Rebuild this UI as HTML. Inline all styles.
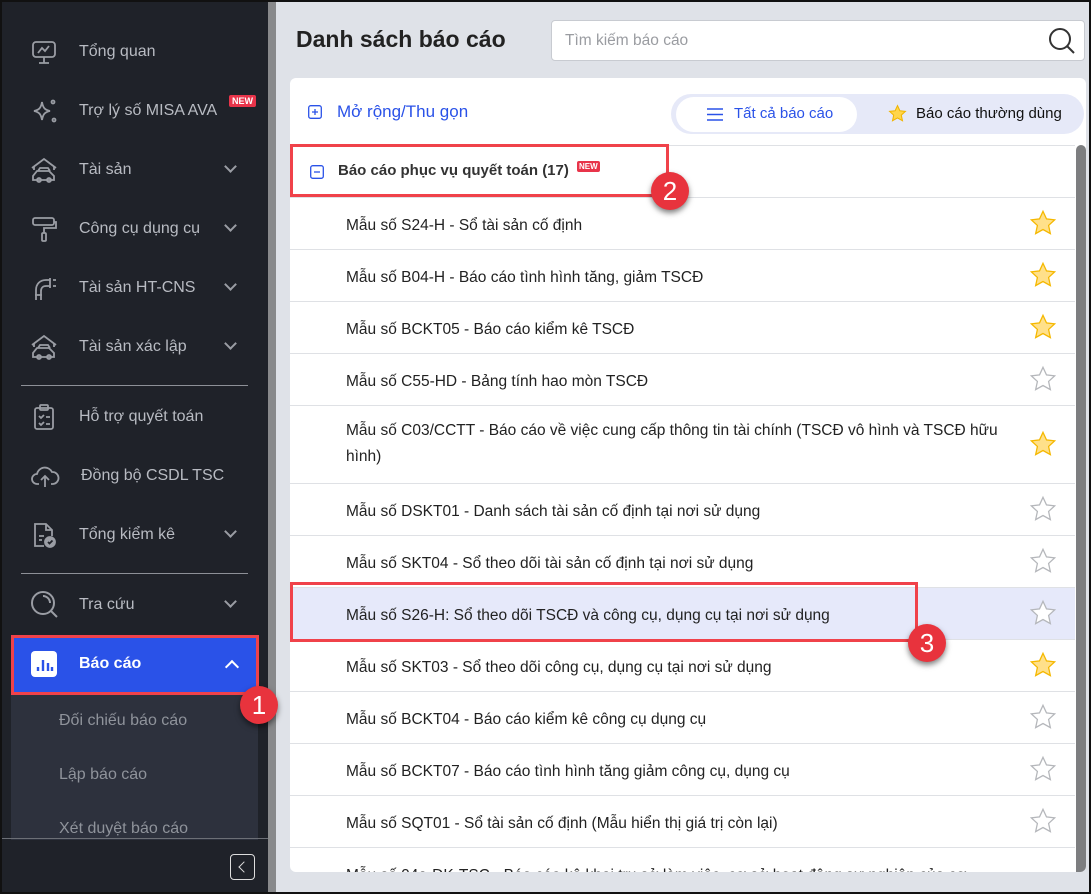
<!DOCTYPE html>
<html><head><meta charset="utf-8"><style>
*{box-sizing:border-box;margin:0;padding:0}
body{width:1091px;height:894px;overflow:hidden;position:relative;background:#e4e6eb;font-family:"Liberation Sans",sans-serif}
.abs{position:absolute}
#frame{left:0;top:0;width:1091px;height:894px;border:2px solid #111;z-index:10;pointer-events:none}
#sb{left:0;top:0;width:268px;height:894px;background:#1f2229}
#strip{left:268px;top:0;width:8px;height:894px;background:#88898b}
.si{position:absolute;left:0;width:268px;height:40px;color:#b8bbc2;font-size:16px;display:flex;align-items:center}
.si svg{position:absolute;left:30px}
.si .t{position:absolute;left:79px}
.chev{position:absolute;left:226px;width:9px;height:9px;border-right:2px solid #9a9da4;border-bottom:2px solid #9a9da4;transform:rotate(45deg)}
.div{position:absolute;left:21px;width:227px;height:1px;background:#8d9097}
.sub{position:absolute;left:59px;color:#8f939b;font-size:16px}
#main{left:276px;top:0;width:815px;height:894px;background:#dfe2e8}
#card{left:290px;top:78px;width:796px;height:794px;background:#fff;border-radius:6px;overflow:hidden}
.row{position:absolute;left:0;width:785px;border-top:1px solid #dfe1e5;font-size:15.5px;color:#222}
.row .t{position:absolute;left:56px;top:15px;line-height:26px}
.star{position:absolute;left:739px;top:11px}
</style></head><body>
<div id="sb" class="abs">
<div class="si" style="top:32px"><svg width="28" height="28" viewBox="0 0 28 28" fill="none" stroke="#9a9da4" stroke-width="1.8"><rect x="3" y="4" width="22" height="15" rx="3"/><path d="M9 25h10M14 19v6M8 15l4-5 3 3 4-5"/></svg><span class="t">Tổng quan</span></div>
<div class="si" style="top:91px"><svg width="28" height="28" viewBox="0 0 28 28" fill="none" stroke="#9a9da4" stroke-width="1.8"><path d="M12 5c1 6 3 8 8 9-5 1-7 3-8 9-1-6-3-8-8-9 5-1 7-3 8-9z"/><circle cx="23" cy="5" r="1.5"/><circle cx="24" cy="23" r="1.5"/></svg><span class="t">Trợ lý số MISA AVA</span><span class="abs" style="left:229px;top:4px;background:#e8344a;color:#fff;font-size:9px;font-weight:bold;padding:1px 3px;border-radius:2px">NEW</span></div>
<div class="si" style="top:150px"><svg width="28" height="28" viewBox="0 0 28 28" fill="none" stroke="#9a9da4" stroke-width="1.8"><path d="M2 12L14 3l12 9M4 10v4M24 10v4"/><path d="M3 24v-4l4-5h12l5 5v4zM8 15l2-3h8l2 3"/><circle cx="9" cy="24" r="2"/><circle cx="19" cy="24" r="2"/></svg><span class="t">Tài sản</span><span class="chev" style="top:12px"></span></div>
<div class="si" style="top:209px"><svg width="28" height="28" viewBox="0 0 28 28" fill="none" stroke="#9a9da4" stroke-width="1.8"><rect x="3" y="3" width="21" height="7" rx="2"/><path d="M24 7h2v6H14v5"/><rect x="12" y="18" width="4" height="8" rx="1"/></svg><span class="t">Công cụ dụng cụ</span><span class="chev" style="top:12px"></span></div>
<div class="si" style="top:268px"><svg width="28" height="28" viewBox="0 0 28 28" fill="none" stroke="#9a9da4" stroke-width="1.8"><path d="M6 26V16c0-6 4-10 10-10h4M11 26V17c0-3 2-5 5-5h4M20 4v10M23 6h3M23 12h3M5 21h7"/></svg><span class="t">Tài sản HT-CNS</span><span class="chev" style="top:12px"></span></div>
<div class="si" style="top:327px"><svg width="28" height="28" viewBox="0 0 28 28" fill="none" stroke="#9a9da4" stroke-width="1.8"><path d="M2 12L14 3l12 9M4 10v4M24 10v4"/><path d="M3 24v-4l4-5h12l5 5v4zM8 15l2-3h8l2 3"/><circle cx="9" cy="24" r="2"/><circle cx="19" cy="24" r="2"/></svg><span class="t">Tài sản xác lập</span><span class="chev" style="top:12px"></span></div>
<div class="div" style="top:385px"></div>
<div class="si" style="top:397px"><svg width="28" height="28" viewBox="0 0 28 28" fill="none" stroke="#9a9da4" stroke-width="1.8"><rect x="5" y="5" width="18" height="21" rx="2"/><rect x="10" y="2" width="8" height="5" rx="1"/><path d="M9 13l2 2 3-3M16 14h4M9 20l2 2 3-3M16 21h4"/></svg><span class="t">Hỗ trợ quyết toán</span></div>
<div class="si" style="top:456px"><svg width="30" height="28" viewBox="0 0 30 28" fill="none" stroke="#9a9da4" stroke-width="1.8"><path d="M9 22H7a5 5 0 010-10 8 8 0 0115-2 6 6 0 011 12h-2M15 25V14M11 18l4-4 4 4"/></svg><span class="t" style="left:81px">Đồng bộ CSDL TSC</span></div>
<div class="si" style="top:515px"><svg width="28" height="28" viewBox="0 0 28 28" fill="none" stroke="#9a9da4" stroke-width="1.8"><path d="M14 25H5V3h11l6 6v6M16 3v6h6M9 15h5M9 19h3"/><circle cx="20" cy="21" r="5" fill="#9a9da4"/><path d="M18 21l1.5 1.5 3-3" stroke="#1f2229"/></svg><span class="t">Tổng kiểm kê</span><span class="chev" style="top:12px"></span></div>
<div class="div" style="top:573px"></div>
<div class="si" style="top:585px"><svg width="30" height="30" viewBox="0 0 30 30" fill="none" stroke="#9a9da4" stroke-width="2"><circle cx="13" cy="13" r="11"/><path d="M21 21l6 6M13 6a7 7 0 017 7"/></svg><span class="t">Tra cứu</span><span class="chev" style="top:12px"></span></div>
<div class="abs" style="left:11px;top:692px;width:247px;height:148px;background:#2d313d"></div>
<div class="abs" style="left:11px;top:635px;width:248px;height:60px;background:#2a52e8;border:3px solid #f0424a"></div>
<div class="si" style="top:644px;color:#fff;font-weight:bold"><svg width="26" height="26" viewBox="0 0 26 26" style="left:31px"><rect width="26" height="26" rx="4" fill="#fff"/><path d="M7 16v4M12 9v11M17 12v8M21 16v4" stroke="#2a52e8" stroke-width="2.4"/></svg><span class="t">Báo cáo</span><span class="abs" style="left:227px;top:18px;width:10px;height:10px;border-left:2.5px solid #fff;border-top:2.5px solid #fff;transform:rotate(45deg)"></span></div>
<div class="sub" style="top:712px">Đối chiếu báo cáo</div>
<div class="sub" style="top:766px">Lập báo cáo</div>
<div class="sub" style="top:820px">Xét duyệt báo cáo</div>
<div class="abs" style="left:0;top:838px;width:276px;height:1px;background:#6c6f76"></div>
<div class="abs" style="left:230px;top:854px;width:25px;height:26px;border:1.5px solid #ddd;border-radius:4px"><div class="abs" style="left:9px;top:8px;width:8px;height:8px;border-left:1.5px solid #ddd;border-bottom:1.5px solid #ddd;transform:rotate(45deg)"></div></div>
<div class="abs" style="left:240px;top:686px;width:38px;height:38px;border-radius:50%;background:#e8333d;color:#fff;font-size:26px;text-align:center;line-height:38px;box-shadow:0 3px 6px rgba(0,0,0,.5);z-index:3">1</div>
</div>
<div id="strip" class="abs"></div>
<div id="main" class="abs"></div>
<div class="abs" style="left:296px;top:26px;font-size:23px;font-weight:bold;color:#222">Danh sách báo cáo</div>
<div class="abs" style="left:551px;top:20px;width:534px;height:41px;background:#fff;border:1px solid #c8cbd1;border-radius:4px"><span class="abs" style="left:13px;top:11px;font-size:15.5px;color:#9a9ca1">Tìm kiếm báo cáo</span><svg class="abs" style="left:496px;top:6px" width="28" height="28" viewBox="0 0 28 28" fill="none" stroke="#333" stroke-width="2"><circle cx="12" cy="12" r="10"/><path d="M19 19l7 7"/></svg></div>
<div id="card" class="abs">
<svg class="abs" style="left:18px;top:27px" width="14" height="14" viewBox="0 0 14 14" fill="none" stroke="#2a52e8" stroke-width="1.3"><rect x=".7" y=".7" width="12.6" height="12.6" rx="2"/><path d="M4 7h6M7 4v6"/></svg>
<span class="abs" style="left:47px;top:24px;font-size:17px;color:#2a52e8">Mở rộng/Thu gọn</span>
<div class="abs" style="left:381px;top:16px;width:413px;height:40px;background:#e6e9f8;border-radius:20px"></div>
<div class="abs" style="left:386px;top:19px;width:181px;height:35px;background:#fff;border-radius:18px"></div>
<svg class="abs" style="left:417px;top:30px" width="16" height="13" viewBox="0 0 16 13" stroke="#2a52e8" stroke-width="1.4"><path d="M0 1h16M0 6.5h16M0 12h16"/></svg>
<span class="abs" style="left:444px;top:27px;font-size:15px;color:#2a52e8">Tất cả báo cáo</span>
<svg class="abs" style="left:598px;top:26px" width="19" height="19" viewBox="0 0 24 24"><path d="M12 2l3 6.5 7 .8-5.2 4.8 1.5 7L12 17.6 5.7 21.1l1.5-7L2 9.3l7-.8z" fill="#ffd54a" stroke="#f0b400" stroke-width="1.3"/></svg>
<span class="abs" style="left:626px;top:27px;font-size:15px;color:#111">Báo cáo thường dùng</span>
<div class="row" style="top:67px;height:52px"><svg class="abs" style="left:20px;top:19px" width="14" height="14" viewBox="0 0 14 14" fill="none" stroke="#2a52e8" stroke-width="1.3"><rect x=".7" y=".7" width="12.6" height="12.6" rx="2"/><path d="M4 7h6"/></svg><span class="abs" style="left:48px;top:16px;font-weight:bold;font-size:15px;color:#333">Báo cáo phục vụ quyết toán (17)</span><span class="abs" style="left:287px;top:15px;background:#e8344a;color:#fff;font-size:8px;font-weight:bold;padding:1px 2px;border-radius:2px">NEW</span></div>
<div class="row" style="top:119px;height:52px"><span class="t">Mẫu số S24-H - Sổ tài sản cố định</span><svg class="star" width="28" height="28" viewBox="0 0 24 24"><path d="M12 2l3 6.5 7 .8-5.2 4.8 1.5 7L12 17.6 5.7 21.1l1.5-7L2 9.3l7-.8z" fill="#ffe08a" stroke="#f5b800" stroke-width="1.1"/></svg></div>
<div class="row" style="top:171px;height:52px"><span class="t">Mẫu số B04-H - Báo cáo tình hình tăng, giảm TSCĐ</span><svg class="star" width="28" height="28" viewBox="0 0 24 24"><path d="M12 2l3 6.5 7 .8-5.2 4.8 1.5 7L12 17.6 5.7 21.1l1.5-7L2 9.3l7-.8z" fill="#ffe08a" stroke="#f5b800" stroke-width="1.1"/></svg></div>
<div class="row" style="top:223px;height:52px"><span class="t">Mẫu số BCKT05 - Báo cáo kiểm kê TSCĐ</span><svg class="star" width="28" height="28" viewBox="0 0 24 24"><path d="M12 2l3 6.5 7 .8-5.2 4.8 1.5 7L12 17.6 5.7 21.1l1.5-7L2 9.3l7-.8z" fill="#ffe08a" stroke="#f5b800" stroke-width="1.1"/></svg></div>
<div class="row" style="top:275px;height:52px"><span class="t">Mẫu số C55-HD - Bảng tính hao mòn TSCĐ</span><svg class="star" width="28" height="28" viewBox="0 0 24 24"><path d="M12 2l3 6.5 7 .8-5.2 4.8 1.5 7L12 17.6 5.7 21.1l1.5-7L2 9.3l7-.8z" fill="#fff" stroke="#b5b7bb" stroke-width="1.1"/></svg></div>
<div class="row" style="top:327px;height:78px"><span class="t" style="top:12px;width:680px">Mẫu số C03/CCTT - Báo cáo về việc cung cấp thông tin tài chính (TSCĐ vô hình và TSCĐ hữu hình)</span><svg class="star" style="top:24px" width="28" height="28" viewBox="0 0 24 24"><path d="M12 2l3 6.5 7 .8-5.2 4.8 1.5 7L12 17.6 5.7 21.1l1.5-7L2 9.3l7-.8z" fill="#ffe08a" stroke="#f5b800" stroke-width="1.1"/></svg></div>
<div class="row" style="top:405px;height:52px"><span class="t">Mẫu số DSKT01 - Danh sách tài sản cố định tại nơi sử dụng</span><svg class="star" width="28" height="28" viewBox="0 0 24 24"><path d="M12 2l3 6.5 7 .8-5.2 4.8 1.5 7L12 17.6 5.7 21.1l1.5-7L2 9.3l7-.8z" fill="#fff" stroke="#b5b7bb" stroke-width="1.1"/></svg></div>
<div class="row" style="top:457px;height:52px"><span class="t">Mẫu số SKT04 - Sổ theo dõi tài sản cố định tại nơi sử dụng</span><svg class="star" width="28" height="28" viewBox="0 0 24 24"><path d="M12 2l3 6.5 7 .8-5.2 4.8 1.5 7L12 17.6 5.7 21.1l1.5-7L2 9.3l7-.8z" fill="#fff" stroke="#b5b7bb" stroke-width="1.1"/></svg></div>
<div class="row" style="top:509px;height:52px;background:#e6e9fa"><span class="t">Mẫu số S26-H: Sổ theo dõi TSCĐ và công cụ, dụng cụ tại nơi sử dụng</span><svg class="star" width="28" height="28" viewBox="0 0 24 24"><path d="M12 2l3 6.5 7 .8-5.2 4.8 1.5 7L12 17.6 5.7 21.1l1.5-7L2 9.3l7-.8z" fill="#fff" stroke="#b5b7bb" stroke-width="1.1"/></svg></div>
<div class="row" style="top:561px;height:52px"><span class="t">Mẫu số SKT03 - Sổ theo dõi công cụ, dụng cụ tại nơi sử dụng</span><svg class="star" width="28" height="28" viewBox="0 0 24 24"><path d="M12 2l3 6.5 7 .8-5.2 4.8 1.5 7L12 17.6 5.7 21.1l1.5-7L2 9.3l7-.8z" fill="#ffe08a" stroke="#f5b800" stroke-width="1.1"/></svg></div>
<div class="row" style="top:613px;height:52px"><span class="t">Mẫu số BCKT04 - Báo cáo kiểm kê công cụ dụng cụ</span><svg class="star" width="28" height="28" viewBox="0 0 24 24"><path d="M12 2l3 6.5 7 .8-5.2 4.8 1.5 7L12 17.6 5.7 21.1l1.5-7L2 9.3l7-.8z" fill="#fff" stroke="#b5b7bb" stroke-width="1.1"/></svg></div>
<div class="row" style="top:665px;height:52px"><span class="t">Mẫu số BCKT07 - Báo cáo tình hình tăng giảm công cụ, dụng cụ</span><svg class="star" width="28" height="28" viewBox="0 0 24 24"><path d="M12 2l3 6.5 7 .8-5.2 4.8 1.5 7L12 17.6 5.7 21.1l1.5-7L2 9.3l7-.8z" fill="#fff" stroke="#b5b7bb" stroke-width="1.1"/></svg></div>
<div class="row" style="top:717px;height:52px"><span class="t">Mẫu số SQT01 - Sổ tài sản cố định (Mẫu hiển thị giá trị còn lại)</span><svg class="star" width="28" height="28" viewBox="0 0 24 24"><path d="M12 2l3 6.5 7 .8-5.2 4.8 1.5 7L12 17.6 5.7 21.1l1.5-7L2 9.3l7-.8z" fill="#fff" stroke="#b5b7bb" stroke-width="1.1"/></svg></div>
<div class="row" style="top:769px;height:52px"><span class="t" style="white-space:nowrap">Mẫu số 04a-ĐK-TSC - Báo cáo kê khai trụ sở làm việc, cơ sở hoạt động sự nghiệp của cơ</span></div>
<div class="abs" style="left:786px;top:67px;width:10px;height:727px;background:#7d7e80;border-radius:5px 5px 0 0"></div>
</div>
<div class="abs" style="left:290px;top:144px;width:379px;height:53px;border:3px solid #f0424a"></div>
<div class="abs" style="left:651px;top:172px;width:38px;height:38px;border-radius:50%;background:#e8333d;color:#fff;font-size:26px;text-align:center;line-height:38px;box-shadow:0 3px 6px rgba(0,0,0,.5)">2</div>
<div class="abs" style="left:290px;top:582px;width:628px;height:60px;border:3px solid #f0424a"></div>
<div class="abs" style="left:908px;top:624px;width:38px;height:38px;border-radius:50%;background:#e8333d;color:#fff;font-size:26px;text-align:center;line-height:38px;box-shadow:0 3px 6px rgba(0,0,0,.5)">3</div>
<div id="frame" class="abs"></div>
</body></html>
